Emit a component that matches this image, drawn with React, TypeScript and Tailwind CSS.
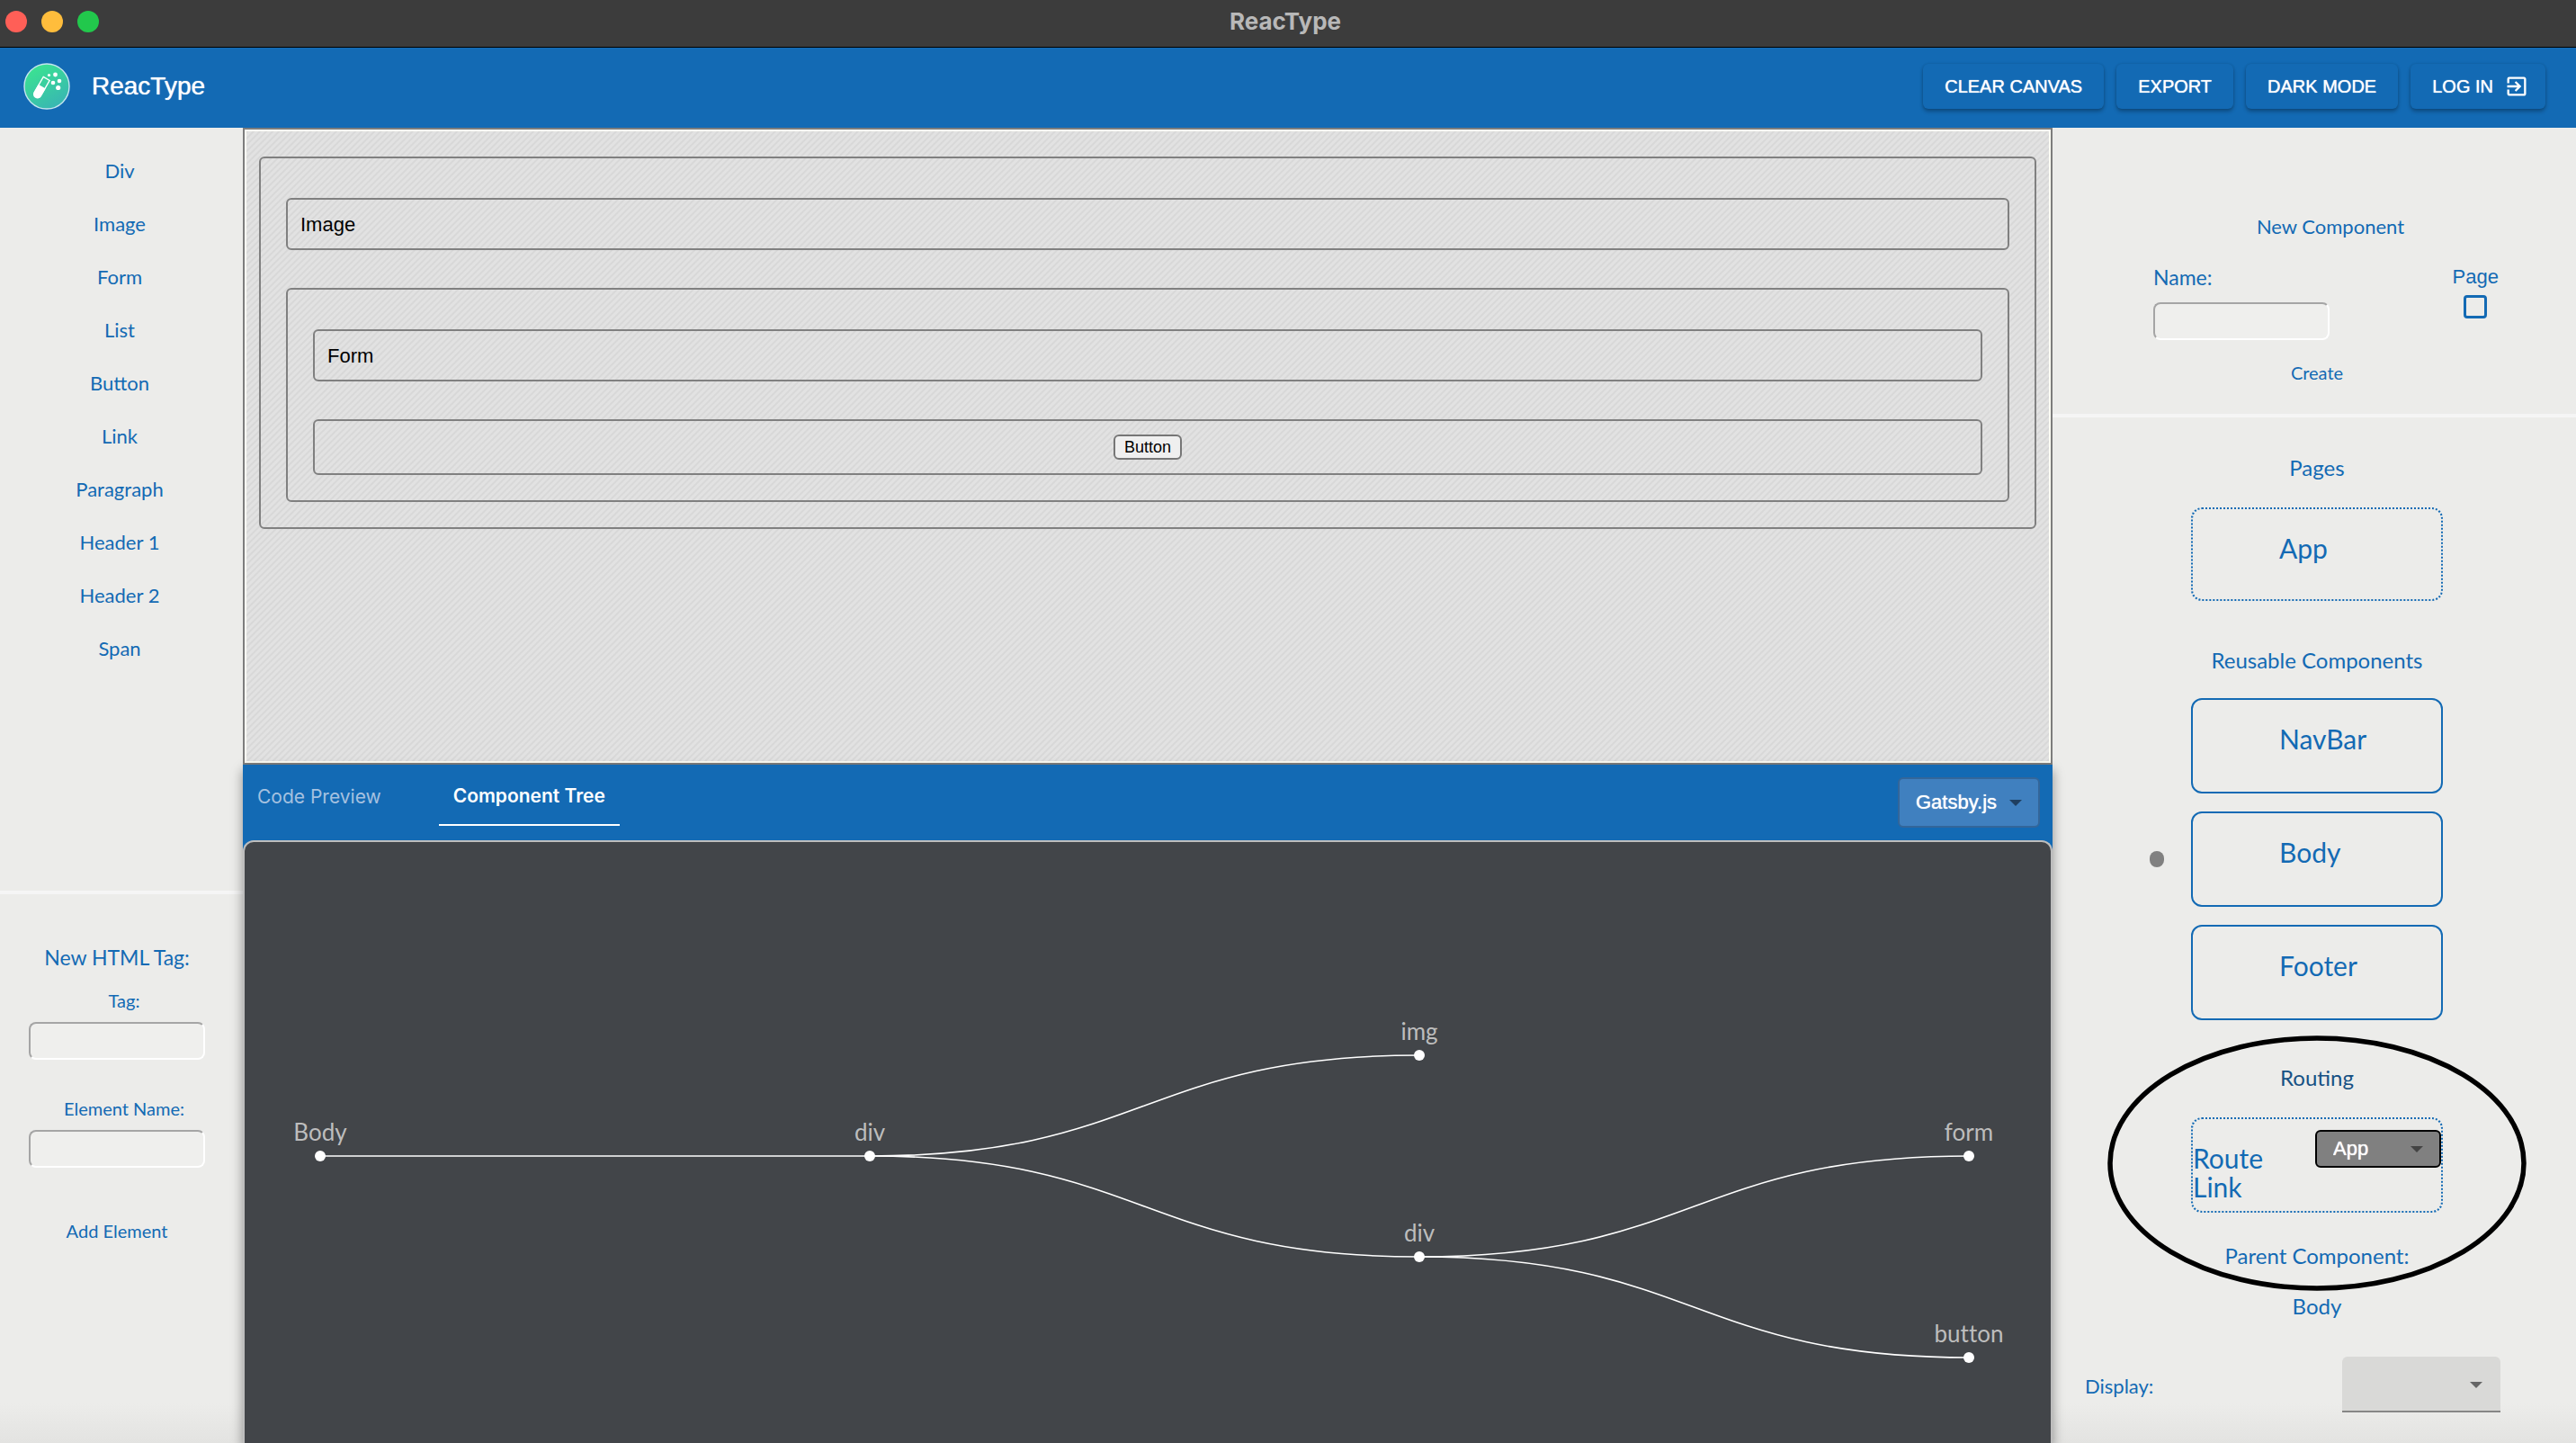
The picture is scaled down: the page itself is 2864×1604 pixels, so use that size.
import React from "react";
import { MdExitToApp } from "react-icons/md";

const panel =
  "flex shrink-0 flex-col bg-[linear-gradient(to_bottom,#ececea_97%,#e3e3e1)] font-[Lato,sans-serif] text-[#136ab4]";

const htmlElements = ["Div", "Image", "Form", "List", "Button", "Link", "Paragraph", "Header 1", "Header 2", "Span"];

function TitleBar() {
  return (
    <div className="grid h-[53px] grid-cols-[1fr_auto_1fr] items-center border-b border-black bg-[#3c3c3c] px-1.5 pb-1">
      <div className="flex gap-4">
        <button aria-label="Close" className="size-6 rounded-full bg-[#ff5f57]" />
        <button aria-label="Minimize" className="size-6 rounded-full bg-[#ffbd3c]" />
        <button aria-label="Zoom" className="size-6 rounded-full bg-[#22c84c]" />
      </div>
      <span className="pr-1.5 font-[Inter,sans-serif] text-[26px] leading-8 font-bold text-[#b8b8b8]">ReacType</span>
    </div>
  );
}

function Logo() {
  return (
    <svg viewBox="0 0 52 52" className="size-[52px] shrink-0" aria-hidden="true">
      <defs>
        <linearGradient id="logo" x1="0.2" y1="0" x2="0.8" y2="1">
          <stop offset="0" stopColor="#3be58f" />
          <stop offset="1" stopColor="#38b3b5" />
        </linearGradient>
      </defs>
      <circle cx="26" cy="26" r="25" fill="url(#logo)" stroke="#c4e6ee" strokeWidth="1.4" />
      <g transform="rotate(30 19 28)">
        <path d="M15.5 15.5h8v19.5a4 4 0 0 1-8 0z" fill="none" stroke="#fff" strokeWidth="1.3" />
        <path d="M14.8 25.5h9.4v10a4.7 4.7 0 0 1-9.4 0z" fill="#fff" />
      </g>
      <g fill="#fff">
        <circle cx="28.5" cy="13.5" r="1.6" />
        <circle cx="35.5" cy="13" r="2.4" />
        <circle cx="40" cy="20" r="2.3" />
        <circle cx="33" cy="22" r="2.3" />
        <circle cx="38.7" cy="27.5" r="2.6" />
      </g>
    </svg>
  );
}

const barButton =
  "flex h-[50px] items-center gap-3 rounded-md bg-[#136ab4] px-6 text-[20px] leading-6 font-normal text-white shadow-[0_3px_4px_rgba(0,0,0,0.28),0_0_3px_rgba(0,0,0,0.12)] [text-shadow:0_0_1px_white]";

function Header() {
  return (
    <header className="flex h-[89px] items-center justify-between bg-[#136ab4] pr-[34px] pb-1 pl-[26px]">
      <div className="flex items-center gap-6">
        <Logo />
        <h1 className="text-[28px] leading-9 text-white [text-shadow:0_0_1px_white]">ReacType</h1>
      </div>
      <nav className="flex gap-3.5">
        <button className={barButton}>CLEAR CANVAS</button>
        <button className={barButton}>EXPORT</button>
        <button className={barButton}>DARK MODE</button>
        <button className={barButton}>
          LOG IN
          <MdExitToApp size={28} className="-mr-1.5" />
        </button>
      </nav>
    </header>
  );
}

const inset =
  "h-[42px] w-[196px] rounded-lg border-2 border-t-[#a5a5a5] border-r-white border-b-white border-l-[#a5a5a5] bg-[#efefed] px-2 text-[20px]";

function LeftPanel() {
  return (
    <aside className={`w-[270px] ${panel}`}>
      <ul className="flex h-[852px] flex-col items-center border-b-4 border-[#f5f5f5] pt-[18px] pr-1">
        {htmlElements.map((name) => (
          <li key={name} className="flex h-[59px] items-center text-[22px] leading-7">
            {name}
          </li>
        ))}
      </ul>
      <form className="mt-[54px] flex w-[260px] flex-col items-center" onSubmit={(e) => e.preventDefault()}>
        <h2 className="text-[23px] leading-8">New HTML Tag:</h2>
        <label htmlFor="tag" className="mt-4 pl-4 text-[20px] leading-8">
          Tag:
        </label>
        <input id="tag" className={`mt-2 ${inset}`} />
        <label htmlFor="element-name" className="mt-[38px] pl-4 text-[20px] leading-8">
          Element Name:
        </label>
        <input id="element-name" className={`mt-2 ${inset}`} />
        <button className="mt-[54px] text-[20px] leading-8">Add Element</button>
      </form>
    </aside>
  );
}

const box = "rounded-md border-2 border-[#808080]";

function Canvas() {
  return (
    <section className="h-[708px] border-2 border-[#7d7d7d] bg-[#dedede] bg-[repeating-linear-gradient(135deg,#e2e2e2_0_2px,#d8d8d8_3px_4px,#e2e2e2_5px)] p-0.5 shadow-[inset_0_0_0_2px_#fbfbf3]">
      <div className={`mx-3.5 mt-7 flex flex-col gap-[42px] px-7 pt-11 pb-7 text-[22px] leading-7 text-black ${box}`}>
        <div className={`flex h-[58px] items-center px-3.5 pt-0.5 ${box}`}>Image</div>
        <div className={`flex flex-col gap-[42px] px-7 pt-11 pb-7 ${box}`}>
          <div className={`flex h-[58px] items-center px-3.5 pt-0.5 ${box}`}>Form</div>
          <div className={`flex h-[62px] items-center justify-center ${box}`}>
            <button className="h-7 rounded-md border-2 border-[#767676] bg-[#efefef] px-2.5 text-[18px] leading-6">
              Button
            </button>
          </div>
        </div>
      </div>
    </section>
  );
}

const nodes = [
  { name: "Body", x: 84, y: 349 },
  { name: "div", x: 695, y: 349 },
  { name: "img", x: 1306, y: 237 },
  { name: "div", x: 1306, y: 461 },
  { name: "form", x: 1917, y: 349 },
  { name: "button", x: 1917, y: 573 },
];
const links = [
  [0, 1],
  [1, 2],
  [1, 3],
  [3, 4],
  [3, 5],
];

function ComponentTree() {
  return (
    <svg viewBox="0 0 2008 668" preserveAspectRatio="xMidYMin slice" className="h-full w-full" role="img" aria-label="Component Tree">
      <g fill="none" stroke="#fff" strokeWidth="1.6">
        {links.map(([a, b]) => {
          const s = nodes[a];
          const t = nodes[b];
          const m = (s.x + t.x) / 2;
          return <path key={`${a}-${b}`} d={`M${s.x} ${s.y}C${m} ${s.y} ${m} ${t.y} ${t.x} ${t.y}`} />;
        })}
      </g>
      {nodes.map((n) => (
        <g key={`${n.x}-${n.y}`}>
          <circle cx={n.x} cy={n.y} r="6" fill="#fff" />
          <text
            x={n.x}
            y={n.y - 17}
            textAnchor="middle"
            fill="#bdbdbd"
            className="font-[Lato,sans-serif] text-[26px] [font-variant-ligatures:none]"
          >
            {n.name}
          </text>
        </g>
      ))}
    </svg>
  );
}

function Arrow({ className }: { className: string }) {
  return (
    <svg viewBox="0 0 14 7" aria-hidden="true" className={`pointer-events-none absolute h-[7px] w-3.5 ${className}`}>
      <path d="M0 0h14l-7 7z" fill="currentColor" />
    </svg>
  );
}

function BottomPanel() {
  return (
    <section className="z-10 flex min-h-0 flex-1 flex-col bg-[#136ab4] shadow-[0_6px_12px_rgba(0,0,0,0.4)]">
      <div className="flex h-[84px] justify-between pr-[14px] pl-4">
        <div role="tablist" className="flex h-[68px] gap-16 font-[Inter,sans-serif] text-[21px] leading-7">
          <button role="tab" aria-selected="false" className="pt-1 font-normal text-[#a5c1e0]">
            Code Preview
          </button>
          <button role="tab" aria-selected="true" className="border-b-2 border-white px-4 pt-1 font-semibold text-white">
            Component Tree
          </button>
        </div>
        <div className="relative mt-3.5 h-14 w-[158px]">
          <select
            aria-label="Project type"
            className="block h-full w-full appearance-none rounded-md border-2 border-[#33669a] bg-[#4080bf] pl-[18px] text-[22px] leading-7 text-white [text-shadow:0_0_1px_white]"
          >
            <option>Gatsby.js</option>
          </select>
          <Arrow className="top-[25px] right-5 text-[#1f3f60]" />
        </div>
      </div>
      <div className="min-h-0 flex-1 overflow-hidden rounded-t-xl border-2 border-b-0 border-[#bdbdbd] bg-[#424549]">
        <ComponentTree />
      </div>
    </section>
  );
}

const card = "flex w-[280px] rounded-xl border-2 border-[#136ab4] text-[30px] leading-8";

function RightPanel() {
  return (
    <aside className={`w-[582px] ${panel}`}>
      <form
        className="flex h-[322px] flex-col border-b-4 border-[#f5f5f5] pt-[94px] pl-28"
        onSubmit={(e) => e.preventDefault()}
      >
        <h2 className="w-[394px] text-center text-[22px] leading-8">New Component</h2>
        <div className="mt-6 flex justify-between pr-[86px]">
          <div className="flex flex-col">
            <label htmlFor="component-name" className="text-[23px] leading-8">
              Name:
            </label>
            <input id="component-name" className={`mt-3 ${inset}`} />
          </div>
          <div className="flex flex-col items-center font-['Liberation_Sans',sans-serif]">
            <label htmlFor="is-page" className="text-[22px] leading-8">
              Page
            </label>
            <input
              id="is-page"
              type="checkbox"
              className="mt-1 size-[26px] appearance-none rounded-sm border-3 border-[#136ab4]"
            />
          </div>
        </div>
        <button className="mt-5 w-[364px] text-[20px] leading-8">Create</button>
      </form>

      <div className="flex flex-col items-center pl-1.5">
        <h2 className="mt-10 text-[24px] leading-8">Pages</h2>
        <button className={`mt-7 h-[104px] border-dotted pt-[27px] pl-24 ${card}`}>App</button>

        <h2 className="mt-[50px] text-[24px] leading-8">Reusable Components</h2>
        <div className="mt-[26px] flex flex-col gap-5">
          <button className={`h-[106px] pt-[27px] pl-24 ${card}`}>NavBar</button>
          <div className="relative">
            <span className="absolute top-[44px] -left-[46px] h-[18px] w-4 rounded-full bg-[#808080]" />
            <button className={`h-[106px] pt-[27px] pl-24 ${card}`}>Body</button>
          </div>
          <button className={`h-[106px] pt-[27px] pl-24 ${card}`}>Footer</button>
        </div>

        <div className="relative mt-12 flex flex-col items-center">
          <svg
            viewBox="0 0 468 286"
            aria-hidden="true"
            className="pointer-events-none absolute -top-[32px] left-1/2 h-[286px] w-[468px] -translate-x-1/2"
          >
            <ellipse cx="234" cy="143" rx="230" ry="139" fill="none" stroke="#000" strokeWidth="5.5" />
          </svg>
          <h2 className="text-[24px] leading-8 text-[#175184]">Routing</h2>
          <div className={`mt-7 h-[106px] justify-between border-dotted ${card}`}>
            <span className="w-24 pt-[27px]">Route Link</span>
            <span className="relative mt-3 h-[42px] w-[140px]">
              <select
                aria-label="Route Link"
                className="block h-full w-full appearance-none rounded-md border-2 border-black bg-[#808080] pl-[18px] font-['Liberation_Sans',sans-serif] text-[22px] leading-7 text-white [text-shadow:0_0_1px_white]"
              >
                <option>App</option>
              </select>
              <Arrow className="top-[18px] right-5 text-[#444]" />
            </span>
          </div>
          <p className="mt-8 text-[24px] leading-8">Parent Component:</p>
        </div>
        <p className="mt-6 text-[24px] leading-8">Body</p>
      </div>

      <div className="mt-10 flex items-center justify-between pr-[84px] pl-9">
        <label htmlFor="display" className="pt-1 text-[22px] leading-8">
          Display:
        </label>
        <span className="relative h-[62px] w-[176px]">
          <select
            id="display"
            className="block h-full w-full appearance-none rounded-t-md border-b-2 border-[#868686] bg-[#d9d9d7] pl-4 text-[22px]"
          >
            <option></option>
          </select>
          <Arrow className="top-[28px] right-5 text-[#666]" />
        </span>
      </div>
    </aside>
  );
}

export default function App() {
  return (
    <div className="flex h-screen flex-col overflow-hidden bg-[#ececea] font-['Liberation_Sans',Arial,sans-serif]">
      <TitleBar />
      <Header />
      <main className="flex min-h-0 flex-1">
        <LeftPanel />
        <div className="flex min-w-0 flex-1 flex-col">
          <Canvas />
          <BottomPanel />
        </div>
        <RightPanel />
      </main>
    </div>
  );
}
